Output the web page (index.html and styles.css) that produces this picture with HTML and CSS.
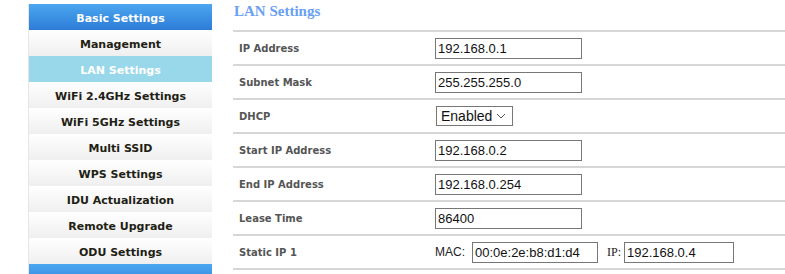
FILE: index.html
```html
<!DOCTYPE html>
<html>
<head>
	<title>LAN Settings</title>
	<link rel="stylesheet" href="styles.css">
</head>
<body>
	<div class="page">
		<div class="menu">
			<div class="menu-head">Basic Settings</div>
			<a class="menu-item">Management</a>
			<a class="menu-item active">LAN Settings</a>
			<a class="menu-item">WiFi 2.4GHz Settings</a>
			<a class="menu-item">WiFi 5GHz Settings</a>
			<a class="menu-item">Multi SSID</a>
			<a class="menu-item">WPS Settings</a>
			<a class="menu-item">IDU Actualization</a>
			<a class="menu-item">Remote Upgrade</a>
			<a class="menu-item">ODU Settings</a>
			<div class="menu-head">Advanced Settings</div>
		</div>

		<div class="content">
			<h2 class="title">LAN Settings</h2>
			<table class="form">
				<tr>
					<td class="label">IP Address</td>
					<td><input class="field" type="text" value="192.168.0.1"></td>
				</tr>
				<tr>
					<td class="label">Subnet Mask</td>
					<td><input class="field" type="text" value="255.255.255.0"></td>
				</tr>
				<tr>
					<td class="label">DHCP</td>
					<td>
						<div class="select">
							<span>Enabled</span>
							<svg width="10" height="6" viewBox="0 0 10 6"><path d="M1 1 L5 5 L9 1" fill="none" stroke="#555" stroke-width="1"/></svg>
						</div>
					</td>
				</tr>
				<tr>
					<td class="label">Start IP Address</td>
					<td><input class="field" type="text" value="192.168.0.2"></td>
				</tr>
				<tr>
					<td class="label">End IP Address</td>
					<td><input class="field" type="text" value="192.168.0.254"></td>
				</tr>
				<tr>
					<td class="label">Lease Time</td>
					<td><input class="field" type="text" value="86400"></td>
				</tr>
				<tr>
					<td class="label">Static IP 1</td>
					<td>
						<div class="static">
							<span class="tag">MAC:</span>
							<input class="field mac" type="text" value="00:0e:2e:b8:d1:d4">
							<span class="tag serif">IP:</span>
							<input class="field ip" type="text" value="192.168.0.4">
						</div>
					</td>
				</tr>
			</table>
		</div>
	</div>
</body>
</html>
```

FILE: styles.css
```css
body {
	margin: 0;
	padding: 0;
	background: #fff;
	font-family: "DejaVu Sans", Verdana, sans-serif;
	overflow: hidden;
}

.page {
	display: flex;
	align-items: flex-start;
}

.menu {
	width: 183px;
	margin: 4px 0 0 28px;
	border-left: 1px solid #e6e6e6;
	display: flex;
	flex-direction: column;
}

.menu-head,
.menu-item {
	box-sizing: border-box;
	height: 26px;
	padding-top: 2px;
	line-height: 25px;
	text-align: center;
	font-size: 11px;
	font-weight: bold;
}

.menu-head {
	color: #fff;
	background: linear-gradient(#4ca7f0, #2d7bd7);
}

.menu-item {
	color: #221e14;
	background: linear-gradient(#ffffff, #efefef);
}

.menu-item.active {
	background: #99d8ea;
	color: #fff;
}

.content {
	flex: 1;
	margin-left: 21px;
}

.title {
	margin: 3px 0 0 1px;
	height: 27px;
	font-family: "Liberation Serif", "Times New Roman", serif;
	font-size: 15px;
	font-weight: bold;
	color: #6a9ff5;
}

.form {
	width: 100%;
	border-collapse: collapse;
	border-top: 2px solid #d6d6d6;
}

.form td {
	height: 32px;
	padding: 0;
	border-bottom: 2px solid #d6d6d6;
	vertical-align: middle;
}

.form td.label {
	width: 196px;
	padding-left: 6px;
	font-size: 10px;
	font-weight: bold;
	color: #555;
}

.field {
	box-sizing: border-box;
	width: 147px;
	height: 21px;
	margin: 0;
	padding: 0 2px;
	border: 1px solid #777;
	font-family: "Liberation Sans", Arial, sans-serif;
	font-size: 13px;
	color: #111;
	display: block;
}

.select {
	box-sizing: border-box;
	width: 77px;
	height: 20px;
	margin-left: 1px;
	border: 1px solid #777;
	display: flex;
	align-items: center;
	justify-content: space-between;
	padding: 0 6px 0 4px;
	font-family: "Liberation Sans", Arial, sans-serif;
	font-size: 14px;
	color: #111;
}

.static {
	display: flex;
	align-items: center;
}

.tag {
	font-family: "Liberation Sans", Arial, sans-serif;
	font-size: 12px;
	color: #222;
	margin-right: 7px;
}

.tag.serif {
	font-family: "Liberation Serif", "Times New Roman", serif;
	margin-left: 9px;
	margin-right: 3px;
}

.field.mac {
	width: 126px;
}

.field.ip {
	width: 110px;
}
```
